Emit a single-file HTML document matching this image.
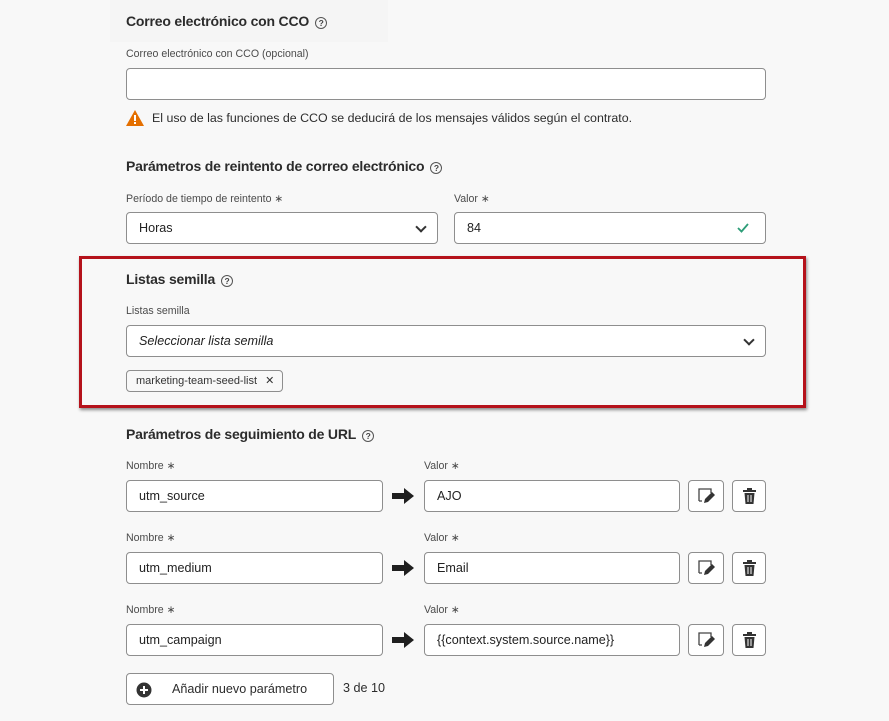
<!DOCTYPE html><html><head><meta charset="utf-8"><style>
*{box-sizing:border-box;margin:0;padding:0}
body{width:889px;height:721px;background:#f8f8f8;font-family:"Liberation Sans",sans-serif;color:#2c2c2c;position:relative;overflow:hidden}
.a{position:absolute}
h2{position:absolute;font-size:14px;font-weight:bold;color:#2c2c2c;letter-spacing:-0.2px}
.q{display:inline-block;width:12px;height:12px;border:1.2px solid #555;border-radius:50%;font-size:8.5px;text-align:center;line-height:10px;font-weight:bold;vertical-align:0px;margin-left:6px;color:#444}
.l{position:absolute;font-size:10.6px;color:#4b4b4b}
.in{position:absolute;background:#fff;border:1px solid #8e8e8e;border-radius:4px;height:32px;font-size:12.6px;line-height:30px;padding-left:12px;color:#222}
.btn{position:absolute;background:#fff;border:1px solid #8e8e8e;border-radius:4px;width:36px;height:32px}
.chev{position:absolute;right:12px;top:10px;width:8px;height:8px;border-right:2px solid #333;border-bottom:2px solid #333;transform:rotate(45deg)}
</style></head><body>
<div class="a" style="left:110px;top:0;width:278px;height:42px;background:#f5f5f5"></div>
<h2 style="left:126px;top:13px">Correo electrónico con CCO<span class="q">?</span></h2>
<div class="l" style="left:126px;top:48px">Correo electrónico con CCO (opcional)</div>
<div class="in" style="left:126px;top:68px;width:640px"></div>
<svg class="a" style="left:125px;top:109px" width="20" height="18"><path d="M10 1L19 17H1Z" fill="#e46f00"/><rect x="9" y="6" width="2" height="6" fill="#fff"/><rect x="9" y="13" width="2" height="2" fill="#fff"/></svg>
<div class="a" style="left:152px;top:111px;font-size:12.4px">El uso de las funciones de CCO se deducirá de los mensajes válidos según el contrato.</div>
<h2 style="left:126px;top:158px">Parámetros de reintento de correo electrónico<span class="q">?</span></h2>
<div class="l" style="left:126px;top:193px">Período de tiempo de reintento ∗</div>
<div class="l" style="left:454px;top:193px">Valor ∗</div>
<div class="in" style="left:126px;top:212px;width:312px">Horas<div class="chev"></div></div>
<div class="in" style="left:454px;top:212px;width:312px">84<svg class="a" style="right:16px;top:10px" width="12" height="10"><path d="M1 5l3.5 3.5L11 1" stroke="#2d9d78" stroke-width="1.8" fill="none"/></svg></div>
<div class="a" style="left:79px;top:256px;width:727px;height:152px;border:3px solid #b5121b;box-shadow:1px 2px 3px rgba(0,0,0,.45)"></div>
<h2 style="left:126px;top:271px">Listas semilla<span class="q">?</span></h2>
<div class="l" style="left:126px;top:305px">Listas semilla</div>
<div class="in" style="left:126px;top:325px;width:640px;font-style:italic">Seleccionar lista semilla<div class="chev"></div></div>
<div class="a" style="left:126px;top:370px;width:157px;height:22px;border:1px solid #8e8e8e;border-radius:4px;background:#f8f8f8;font-size:11px;line-height:20px;padding-left:9px;color:#333">marketing-team-seed-list <span style="margin-left:5px">✕</span></div>
<h2 style="left:126px;top:426px">Parámetros de seguimiento de URL<span class="q">?</span></h2>
<div id="rows"></div>
<script>
var r=[["utm_source","AJO",480],["utm_medium","Email",552],["utm_campaign","{{context.system.source.name}}",624]],h="";
r.forEach(function(x){var y=x[2];
h+='<div class="l" style="left:126px;top:'+(y-20)+'px">Nombre ∗</div><div class="l" style="left:424px;top:'+(y-20)+'px">Valor ∗</div>';
h+='<div class="in" style="left:126px;top:'+y+'px;width:257px">'+x[0]+'</div>';
h+='<svg class="a" style="left:391px;top:'+(y+7)+'px" width="24" height="18"><path d="M1 6h12V1l10 8-10 8v-5H1z" fill="#1f1f1f"/></svg>';
h+='<div class="in" style="left:424px;top:'+y+'px;width:256px">'+x[1]+'</div>';
h+='<div class="btn" style="left:688px;top:'+y+'px"><svg class="a" style="left:9px;top:7px" width="18" height="18"><path d="M1 13V1h12v4" stroke="#444" stroke-width="1.3" fill="none"/><path d="M1 13h3" stroke="#444" stroke-width="1.3"/><path d="M6 15l1-4 7-7 3 3-7 7z" fill="#333"/></svg></div>';
h+='<div class="btn" style="left:732px;top:'+y+'px;width:34px"><svg class="a" style="left:9px;top:7px" width="16" height="17"><rect x="1" y="2" width="13" height="2" fill="#333"/><rect x="5" y="0" width="5" height="2" fill="#333"/><path d="M2.5 5h10l-1 11h-8z" fill="#333"/><path d="M6 7v7M9 7v7" stroke="#fff" stroke-width="1"/></svg></div>';});
document.getElementById("rows").innerHTML=h;
</script>
<div class="a" style="left:126px;top:673px;width:208px;height:32px;border:1px solid #8e8e8e;border-radius:4px;background:#fff;font-size:12.6px;line-height:30px;padding-left:45px">Añadir nuevo parámetro<svg class="a" style="left:9px;top:8px" width="16" height="16"><circle cx="8" cy="8" r="7.5" fill="#333"/><path d="M8 4v8M4 8h8" stroke="#fff" stroke-width="2"/></svg></div>
<div class="a" style="left:343px;top:681px;font-size:12.6px">3 de 10</div>
</body></html>
